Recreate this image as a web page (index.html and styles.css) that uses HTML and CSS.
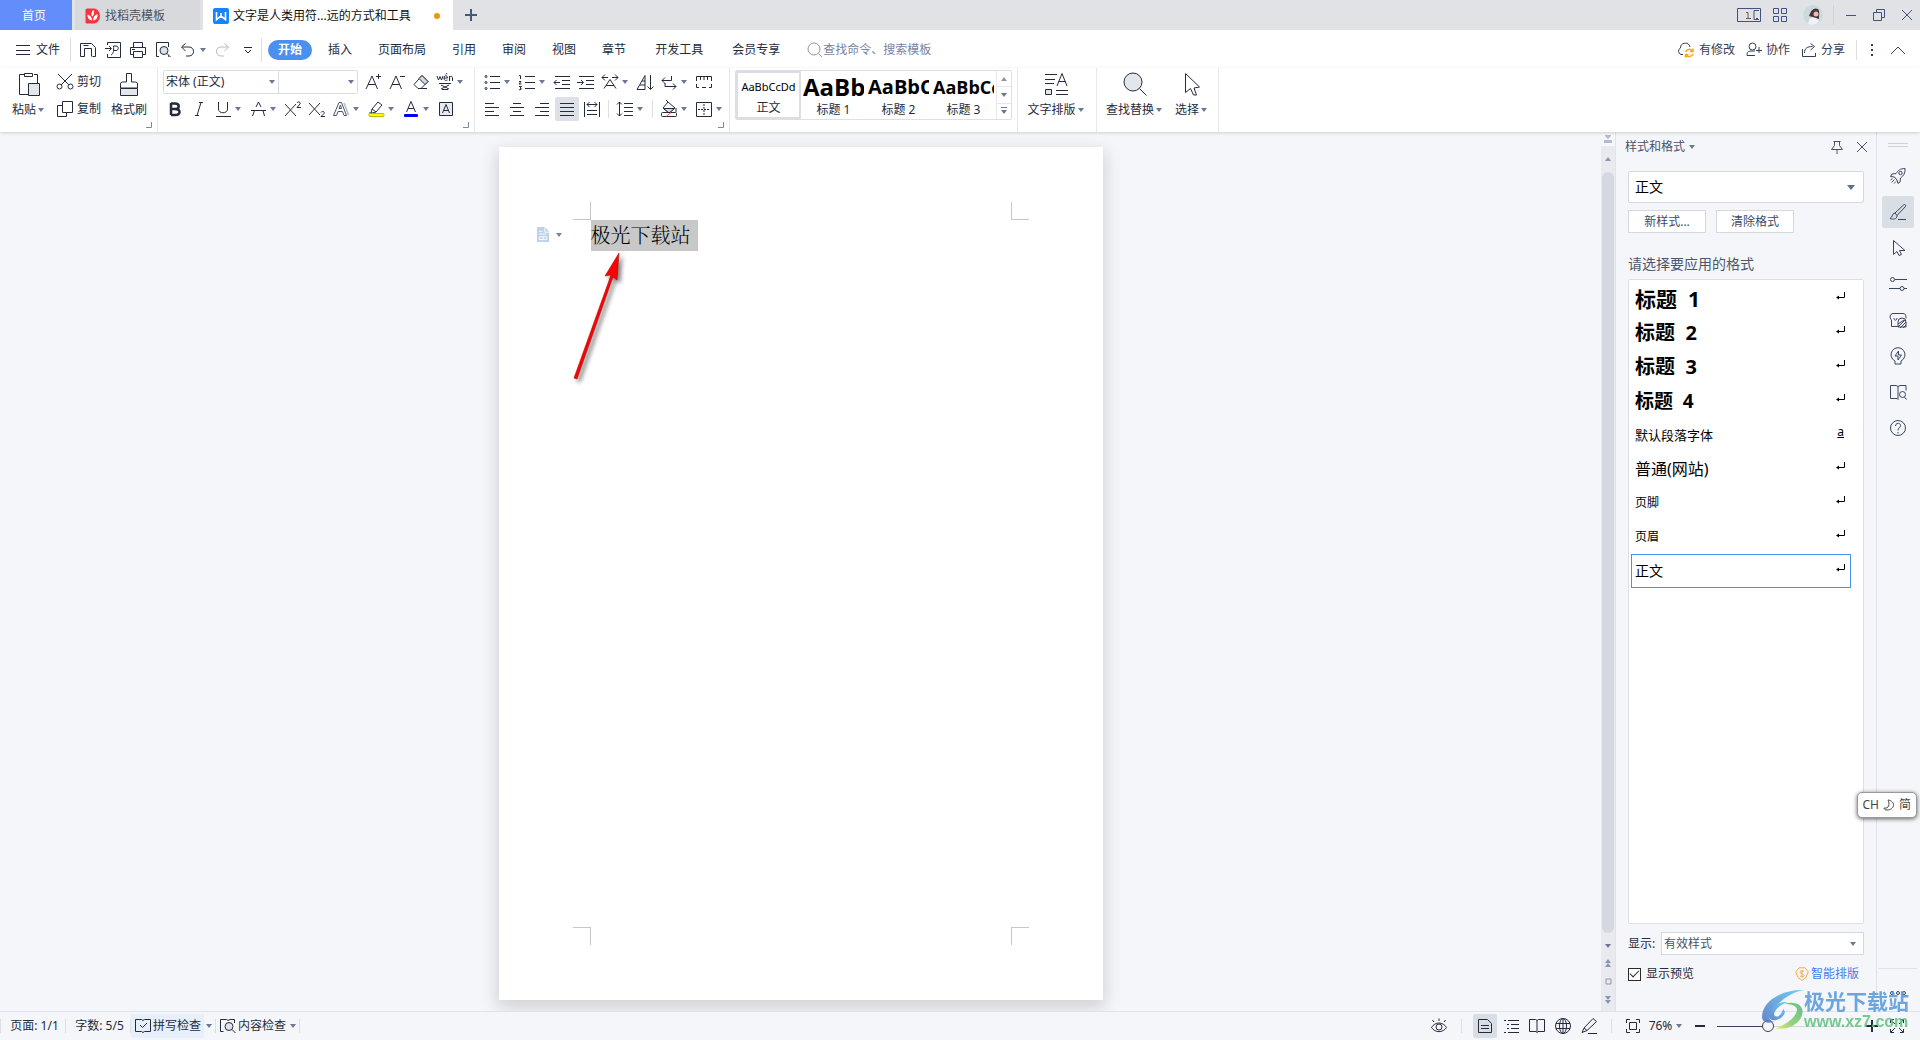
FILE: index.html
```html
<!DOCTYPE html>
<html lang="zh-CN">
<head>
<meta charset="utf-8">
<title>文字是人类用符...远的方式和工具</title>
<link rel="stylesheet" href="styles.css">
</head>
<body>
<svg class="sprite" aria-hidden="true">
  <symbol id="caret" viewBox="0 0 7 4"><path d="M0 0h6L3 4z" fill="#6b7895" stroke="none"/></symbol>
  <symbol id="caret-up" viewBox="0 0 7 4"><path d="M0 4h6L3 0z" fill="#8a96ae" stroke="none"/></symbol>
  <symbol id="launch" viewBox="0 0 6 6"><path d="M5.500 0v5.500H0" stroke="#7e89a3"/></symbol>
  <symbol id="return" viewBox="0 0 10 10"><path d="M8.500 1v5.500H2"/><path d="M0 6.500l3-2v4z" fill="currentColor" stroke="none"/></symbol>
  <symbol id="docer" viewBox="0 0 16 16"><path d="M2 .5h7a6 7.500 0 0 1 0 15H2A1.500 1.500 0 0 1 .5 14V2A1.500 1.500 0 0 1 2 .5z" fill="#f8333c" stroke="none"/><path d="M7 12.500C3.500 12 2.500 9.500 2.500 6.500 5.500 7.500 7 9.500 7 12.500zM7 8.500C5.800 6 6.500 3.500 8.500 2 9.800 4.500 9 7.500 7 8.500zM8 12.500C8 9.500 9.500 7 12.500 6c.5 3.500-1 6-4.500 6.500z" fill="#fff" stroke="none"/></symbol>
  <symbol id="writer" viewBox="0 0 16 16"><rect width="16" height="16" rx="2" fill="#1684fc" stroke="none"/><path d="M3.500 4v7.500L8 8l4.500 3.500V4M8 8V5" stroke="#fff" stroke-width="1.600"/></symbol>
  <symbol id="plus" viewBox="0 0 12 12"><path d="M6 0v12M0 6h12" stroke-width="2"/></symbol>
  <symbol id="tabs" viewBox="0 0 24 14"><path d="M.5.5h23v13H.5zM22 2.500h-5v9h5M19 10.500h2"/><path d="M9 4.500h2V10M9 10.500h5" stroke="#665c55"/></symbol>
  <symbol id="grid" viewBox="0 0 14 14"><path d="M.5.5h5v5h-5zM8.500.5h5v5h-5zM.5 8.500h5v5h-5zM8.500 8.500h5v5h-5z"/></symbol>
  <symbol id="min" viewBox="0 0 12 12"><path d="M1 6.500h10"/></symbol>
  <symbol id="restore" viewBox="0 0 12 12"><path d="M3.500 3V.5h8v8H9M.5 3.500h8v8h-8z"/></symbol>
  <symbol id="close" viewBox="0 0 12 12"><path d="M1 1l10 10M11 1L1 11"/></symbol>
  <symbol id="menu" viewBox="0 0 14 12"><path d="M0 1.500h14M0 6.500h14M0 10.500h14"/></symbol>
  <symbol id="save" viewBox="0 0 16 16"><path d="M4.500 14.500h-4v-13h11l4 4v9h-3M4.500 14.500v-8h7v8M3.500 3.500h5"/></symbol>
  <symbol id="pdf" viewBox="0 0 16 16"><path d="M2.500 3V.5h13v15h-13V12M0 6.500h6M4 4l2.500 2.500L4 9M6 13c2.500-1 3-5 2.500-9H11c3 0 3 4.500 0 4.500H8.500"/></symbol>
  <symbol id="print" viewBox="0 0 16 16"><path d="M3.500 5V.5h9V5M3 12.500H.5v-7h15v7H13M3.500 9.500h9v6h-9zM2 7.500h3"/></symbol>
  <symbol id="preview" viewBox="0 0 16 16"><path d="M4 14.500H1.500v-14h12V5M13.500 13.500v1H13"/><circle cx="9" cy="8.500" r="4" fill="#dfe2e8"/><path d="M12 11.500l3.500 3.500"/></symbol>
  <symbol id="undo" viewBox="0 0 16 16"><path d="M5.500 1.500L1.500 5l4 4M2 5h7c6 0 6 9 0 9H6"/></symbol>
  <symbol id="redo" viewBox="0 0 16 16"><path d="M10.500 1.500l4 3.500-4 4M14 5H7c-6 0-6 9 0 9h3"/></symbol>
  <symbol id="more" viewBox="0 0 8 8"><path d="M0 1.500h8M1 4l3 3 3-3"/></symbol>
  <symbol id="search" viewBox="0 0 16 16"><circle cx="7" cy="7" r="6"/><path d="M11.500 11.500L15 15"/></symbol>
  <symbol id="cloud" viewBox="0 0 18 16"><path d="M6 12.500H4A3.500 3.500 0 0 1 3.500 6 4.800 4.800 0 0 1 13 5"/><path d="M8.500 10a4 4 0 0 1 7-1M16 12a4 4 0 0 1-7 1M16 6.500V9.500h-3M8.500 15.500v-3h3" stroke="#f5a623" stroke-width="1.500"/></symbol>
  <symbol id="collab" viewBox="0 0 16 16"><circle cx="6.500" cy="4.500" r="3.500"/><path d="M9 13.500H1v-1c0-3 2-3.500 5-3.500h3M13 5v6M10 8.500h6"/></symbol>
  <symbol id="share" viewBox="0 0 16 16"><path d="M1.500 7v7.500h13V11M3.500 11c0-5 3-6.500 8-6.500M9.500 1.500l4 3-4 3.500"/></symbol>
  <symbol id="dots" viewBox="0 0 4 14"><path d="M1 1h2v2H1zM1 6h2v2H1zM1 11h2v2H1z" fill="currentColor" stroke="none"/></symbol>
  <symbol id="fold" viewBox="0 0 16 10"><path d="M1 9l7-7 7 7"/></symbol>

  <symbol id="paste" viewBox="0 0 28 28"><path d="M13 24.500H4.500v-20H9M19 4.500h3.500V13M9.500 3.500h8v3h-8z"/><path d="M13.500 13.500h11v12h-11z" fill="#e3e6eb"/></symbol>
  <symbol id="cut" viewBox="0 0 20 20"><path d="M3 2l11 11M17 2L6 13"/><circle cx="4.500" cy="14.500" r="2.500"/><circle cx="15.500" cy="14.500" r="2.500"/></symbol>
  <symbol id="copy" viewBox="0 0 20 20"><path d="M7.500 2.500h10v11h-10zM7 6.500H2.500v11h9V14"/></symbol>
  <symbol id="brush" viewBox="0 0 28 28"><path d="M11.500 12V3.500h5V12h4q2 0 2 2v4h-17v-4q0-2 2-2z"/><path d="M5.500 18.500h17v7h-17z" fill="#e3e6eb"/></symbol>
  <symbol id="grow" viewBox="0 0 20 20"><path d="M3 17L9 4l5.500 13M5 12.500h7.500M13 4.500h5M15.500 2v5"/></symbol>
  <symbol id="shrink" viewBox="0 0 20 20"><path d="M3 17L9 4l5.500 13M5 12.500h7.500M13 4.500h5"/></symbol>
  <symbol id="eraser" viewBox="0 0 20 20"><path d="M11 3.500l6 6-7 7H7l-4-4z" fill="#fff"/><path d="M11 3.500l6 6-3 3-6-6z" fill="#d5d9df"/><path d="M7 16.500h9"/></symbol>
  <symbol id="pinyin" viewBox="0 0 20 20"><path d="M2 4l1.500 4L5 4.500 6.500 8 8 4M9 6h3.500c0-3-3.500-3-3.500 0s2 2.500 3.500 2M14.500 4v5M14.500 5.500c2-2 3-1 3 .5v3M11 2.500l1-1.500M4 11.500h12M6 13l8 4M14 13l-8 4M7 17.500h6"/></symbol>
  <symbol id="bold" viewBox="0 0 20 20"><path d="M6 4v12M6 4.500h4c5 0 5 5.500 0 5.500H6M10 10c6 0 6 6 0 6H6" stroke-width="2.500"/></symbol>
  <symbol id="italic" viewBox="0 0 20 20"><path d="M12 3.500L8 16.500M10 3.500h4M6 16.500h4"/></symbol>
  <symbol id="underline" viewBox="0 0 20 20"><path d="M5.500 3v7c0 5 9 5 9 0V3M3 17.500h15"/></symbol>
  <symbol id="strike" viewBox="0 0 20 20"><path d="M4.500 17l2-5.500M8 8l2.500-5L13 8M15 11.500l1.500 5.500M3 11.500h15"/></symbol>
  <symbol id="sup" viewBox="0 0 20 20"><path d="M2 5l11 12M13 5L2 17M14 4c1-2 4-1 3 1l-3 3.500h4"/></symbol>
  <symbol id="sub" viewBox="0 0 20 20"><path d="M2 4l11 12M13 4L2 16M14 13.500c1-2 4-1 3 1l-3 3h4"/></symbol>
  <symbol id="effect" viewBox="0 0 20 20"><path d="M2.500 16.500L8 3.500h2.500l5 13H13l-1.500-4H7L5.500 16.500zM8 9.500h2.500L9.500 6z" stroke="#4b556b"/><path d="M13 4l4.500 12" stroke="#b3bac6" stroke-width="1.500"/></symbol>
  <symbol id="marker" viewBox="0 0 20 20"><path d="M5 14l1-4 6-7 4 3-6 7-4 1M6 10l4 3M3 14h3" /><rect x="3" y="14.500" width="15" height="3" rx="1" fill="#ff0" stroke="#b9b900"/></symbol>
  <symbol id="color" viewBox="0 0 20 20"><path d="M5.500 13L10 2.500 14.500 13M7 9.500h6"/><rect x="3" y="15" width="14" height="3" rx="1" fill="#0000f5" stroke="none"/></symbol>
  <symbol id="boxed" viewBox="0 0 20 20"><path d="M3.500 3.500h13v13h-13z" fill="#e8eaee"/><path d="M6.500 14L10 5.500l3.500 8.500M7.500 11.500h5"/></symbol>
  <symbol id="bullets" viewBox="0 0 20 20"><path d="M8 4.500h10M8 10.500h10M8 16.500h10"/><circle cx="4" cy="4.500" r="1"/><circle cx="4" cy="10.500" r="1"/><circle cx="4" cy="16.500" r="1"/></symbol>
  <symbol id="numbers" viewBox="0 0 20 20"><path d="M8 4.500h10M8 10.500h10M8 16.500h10M2 3.500h1.500V7M2 9.500h2l-2 2.500h2.500M2 14.500h2.500L3 16l1.500 1-2.500 1"/></symbol>
  <symbol id="outdent" viewBox="0 0 20 20"><path d="M3 4.500h15M10 8.500h8M10 12.500h8M3 16.500h15M2 10.500h6M4.500 8L2 10.500 4.500 13"/></symbol>
  <symbol id="indent" viewBox="0 0 20 20"><path d="M3 4.500h15M10 8.500h8M10 12.500h8M3 16.500h15M1 10.500h6M5 8l2.500 2.500L5 13"/></symbol>
  <symbol id="scale" viewBox="0 0 20 20"><path d="M4 16.500l6-9 6 9M6 13.500h8M2 5.500l3-3M2 5.500h6M2 5.500l3 3M18 5.500l-3-3M18 5.500h-6M18 5.500l-3 3"/></symbol>
  <symbol id="sort" viewBox="0 0 20 20"><path d="M2 17.500L10 3.500v14zM5 13h5M7 9h3M15.500 3v14M12.500 14.500l3 3 3-3"/></symbol>
  <symbol id="wrap" viewBox="0 0 20 20"><path d="M12.500 4v4.500H3M6 5.500l-3 3 3 3M6 14.500h11M14 11.500l3 3-3 3M6 11v3.500"/></symbol>
  <symbol id="ruler" viewBox="0 0 20 20"><path d="M2.500 9V4.500h15V9M6.500 5v3M10 5v3M13.500 5v3M2.500 12v3.500H5M8 15.500h4M15 15.500h2.500V12"/></symbol>
  <symbol id="left" viewBox="0 0 20 20"><path d="M3 4.500h9M3 8.500h14M3 12.500h9M3 16.500h14"/></symbol>
  <symbol id="center" viewBox="0 0 20 20"><path d="M6 4.500h8M3 8.500h14M6 12.500h8M3 16.500h14"/></symbol>
  <symbol id="right" viewBox="0 0 20 20"><path d="M8 4.500h9M3 8.500h14M8 12.500h9M3 16.500h14"/></symbol>
  <symbol id="justify" viewBox="0 0 20 20"><path d="M3 4.500h14M3 8.500h14M3 12.500h14M3 16.500h14"/></symbol>
  <symbol id="spread" viewBox="0 0 20 20"><path d="M2.500 3v15M17.500 3v15M5 5.500h10M7.500 3L5 5.500 7.500 8M12.500 3L15 5.500 12.500 8M5 11.500h10M5 15.500h10"/></symbol>
  <symbol id="spacing" viewBox="0 0 20 20"><path d="M4.500 3v14M2 5.500l2.500-2.500L7 5.500M2 14.500L4.500 17 7 14.500M9 4.500h9M9 8.500h9M9 12.500h9M9 16.500h9"/></symbol>
  <symbol id="fill" viewBox="0 0 20 20"><path d="M9 3l7 6-6 5-6-5z" fill="#fff"/><path d="M4.500 9.500h11L10 14z" fill="#d5d9df"/><path d="M9 3L7 1M17 9v4"/><rect x="2.500" y="13.500" width="15" height="4" rx="1" fill="#fff"/><path d="M7 17.500l5-4" stroke="#f05a5a"/></symbol>
  <symbol id="border" viewBox="0 0 20 20"><path d="M2.500 3.500h15v14h-15z"/><path d="M10 5v11M4 10.500h12" stroke-dasharray="2 1"/></symbol>
  <symbol id="layout" viewBox="0 0 28 28"><path d="M3 4.500h12M3 9.500h10M3 13.500h9M15 16l5-12.500L25 16M16.500 11.500h7M14 20.500h12M14 24.500h12"/><path d="M3.500 19.500h6v5h-6z" fill="#e3e6eb"/></symbol>
  <symbol id="find" viewBox="0 0 28 28"><circle cx="12" cy="12" r="9" fill="#e3e6eb"/><path d="M18.500 18.500l7 7"/></symbol>
  <symbol id="select" viewBox="0 0 28 28"><path d="M7.500 3.500v19l5-4 3 6.500h3l-2.500-7 5.500-1z"/></symbol>

  <symbol id="pin" viewBox="0 0 14 14"><path d="M3.500 1.500h7M4.500 1.500v4l-3 4h11l-3-4v-4M7 9.500V14"/></symbol>
  <symbol id="rocket" viewBox="0 0 18 18"><path d="M16 1.500c-5 0-7 2-9 5L3 7 1.500 9.500l4 .5 2.500 3 1 3.500L11 15l.5-4c3-2 5-5 4.500-9.500zM1.500 13l2-1.500M2.500 15.500l3-3M5 16.500l2-2"/><circle cx="11.500" cy="6" r="1.700"/></symbol>
  <symbol id="pen" viewBox="0 0 18 18"><path d="M16.500 2c-1-1-2 0-2.500.5L6 10l2 2.500 8-8.500c.7-.8 1-1.500.5-2zM6 10c-3 0-2 4-5 5.500 3 1 7 1 7-3M9 16.500h8"/></symbol>
  <symbol id="cursor" viewBox="0 0 18 18"><path d="M4.500 1.500v14l3.500-3 2 4 2.500-1-2-4h5.500z"/></symbol>
  <symbol id="sliders" viewBox="0 0 18 18"><circle cx="3.500" cy="4.500" r="2"/><circle cx="13" cy="13.500" r="2"/><path d="M6 4.500h12M0 13.500h11M15 13.500h3"/></symbol>
  <symbol id="texture" viewBox="0 0 18 18"><path d="M5.500 15.500h-3V9C0 7 1 2.500 4 2.500h10c3 0 3 3 3 5M5 7c0 3 3 3 3 0M9 15.500H5"/><path d="M9 11a4 4 0 0 1 8 0v5H9zM9 13l6-4M9 16l7-7M11 17l6-6M14 17l3-3"/></symbol>
  <symbol id="bulb" viewBox="0 0 18 18"><path d="M6 14a7 7 0 1 1 6 0v3H6zM9.500 4L6 9h3v4l3.500-5H9.500z"/></symbol>
  <symbol id="bookfind" viewBox="0 0 18 18"><path d="M9 3.500L7 2.500H1.500v13H8l1 1V3.500l2-1h6v5"/><circle cx="13.500" cy="11.500" r="3"/><path d="M15.500 14l2 2.500"/></symbol>
  <symbol id="help" viewBox="0 0 18 18"><circle cx="9" cy="9" r="7.500"/><path d="M6.500 7c0-3.500 5-3.500 5-.5C11.500 9 9 8.500 9 11.500M9 13v1.500"/></symbol>
  <symbol id="three" viewBox="0 0 18 6"><circle cx="3" cy="3" r="1.500"/><circle cx="9" cy="3" r="1.500"/><circle cx="15" cy="3" r="1.500"/></symbol>
  <symbol id="gem" viewBox="0 0 14 14"><path d="M4 .8h6l3.300 4L11 10.500 7 13.300 3 10.500.7 5z" stroke="#f2ae3c"/><path d="M9 4.500c-1-1-4-1-4 .7S9 6.800 9 8.500s-3 1.500-4 .3M7 3v7.500" stroke="#f2ae3c"/></symbol>
  <symbol id="smart" viewBox="0 0 14 16"><path d="M0 0h9l4 5v11H0z" fill="#b9cde9" stroke="none"/><path d="M8.500 0v5.500H13M2 4.500h4M2 7.500h8M2.500 10.500h8v3h-8zM6.500 10v3" stroke="#fff"/></symbol>

  <symbol id="spell" viewBox="0 0 16 16"><path d="M6.500 1.500h-6v12h6l1.500 1 1.500-1h6v-12h-6L8 2.500zM5 7l2.500 2.500L12 5"/></symbol>
  <symbol id="content" viewBox="0 0 16 16"><path d="M6.500 1.500h-6v12h3M10 1.500h4.500V5M6.500 1.500L8 2.500l2-1"/><circle cx="9" cy="8.500" r="4" fill="#dfe2e8"/><path d="M12 11.500l3.500 3.500"/></symbol>
  <symbol id="eye" viewBox="0 0 18 18"><path d="M1.500 10.500C5 4.500 13 4.500 16.500 10.500 13 16 5 16 1.500 10.500zM9 4V1.500M4 5L2.500 3M14 5l1.500-2"/><circle cx="9" cy="10" r="3"/></symbol>
  <symbol id="pagev" viewBox="0 0 18 18"><path d="M2.500 2.500h9l4 4v9h-13zM5 8.500h8M5 11.500h8"/></symbol>
  <symbol id="outline" viewBox="0 0 18 18"><path d="M6 3.500h11M9 7.500h8M9 11.500h8M6 15.500h11M2 3.500h2M5 7.500h2M5 11.500h2M2 15.500h2"/></symbol>
  <symbol id="book" viewBox="0 0 18 18"><path d="M9 3.500l-1.500-1h-6v12H8l1 1 1-1h6.500v-12h-6zM9 3.500v12"/></symbol>
  <symbol id="globe" viewBox="0 0 18 18"><circle cx="9" cy="9" r="7.500"/><ellipse cx="9" cy="9" rx="3.500" ry="7.500"/><path d="M9 1.500v15M2 6.500h14M2 11.500h14"/></symbol>
  <symbol id="write" viewBox="0 0 18 18"><path d="M13 1.500l3.500 3L7 13.500 2 15.500 4 11zM4 11l3 2.500M8 16.500h9"/></symbol>
  <symbol id="fit" viewBox="0 0 16 16"><path d="M1.500 5V1.500H5M11 1.500h3.500V5M14.500 11v3.500H11M5 14.500H1.500V11M4.500 4.500h7v7h-7z"/></symbol>
  <symbol id="full" viewBox="0 0 16 16"><path d="M1.500 5V1.500H5M11 1.500h3.500V5M14.500 11v3.500H11M5 14.500H1.500V11M2 2l4 4M14 2l-4 4M2 14l4-4M14 14l-4-4"/></symbol>
</svg>

<header class="tabbar">
  <button class="tab tab-home">首页</button>
  <button class="tab tab-docer"><svg class="i16"><use href="#docer"/></svg>找稻壳模板</button>
  <button class="tab tab-doc"><svg class="i16"><use href="#writer"/></svg>文字是人类用符...远的方式和工具<span class="unsaved"></span></button>
  <button class="newtab" aria-label="新建"><svg class="i12"><use href="#plus"/></svg></button>
  <div class="window-tools">
    <button aria-label="标签"><svg width="24" height="14"><use href="#tabs"/></svg></button>
    <button aria-label="应用"><svg width="14" height="14"><use href="#grid"/></svg></button>
    <button aria-label="账户"><svg width="20" height="20" viewBox="0 0 20 20"><circle cx="10" cy="10" r="10" fill="#ccdae0" stroke="none"/><path d="M5 19c1-4 2-7 5-7s5 3 6 5q-4 4-11 2z" fill="#eef3f5" stroke="none"/><path d="M6 11c2-6 5-9 9-7 2 2 1 7 1 10l-3-1z" fill="#4b3438" stroke="none"/><circle cx="13" cy="9" r="2.500" fill="#e9bfae" stroke="none"/></svg></button>
    <span class="vline"></span>
    <button aria-label="最小化"><svg class="i12"><use href="#min"/></svg></button>
    <button aria-label="还原"><svg class="i12"><use href="#restore"/></svg></button>
    <button aria-label="关闭"><svg class="i12"><use href="#close"/></svg></button>
  </div>
</header>

<nav class="menubar">
  <button class="file"><svg width="14" height="12"><use href="#menu"/></svg>文件</button>
  <span class="vline"></span>
  <div class="quick">
    <button aria-label="保存"><svg class="i16"><use href="#save"/></svg></button>
    <button aria-label="输出为PDF"><svg class="i16"><use href="#pdf"/></svg></button>
    <button aria-label="打印"><svg class="i16"><use href="#print"/></svg></button>
    <button aria-label="打印预览"><svg class="i16"><use href="#preview"/></svg></button>
    <button class="undo" aria-label="撤销"><svg class="i16"><use href="#undo"/></svg><svg class="caret"><use href="#caret"/></svg></button>
    <button class="redo" aria-label="恢复"><svg class="i16"><use href="#redo"/></svg></button>
    <button aria-label="更多"><svg width="8" height="8"><use href="#more"/></svg></button>
  </div>
  <span class="vline"></span>
  <div class="menus">
    <button class="current">开始</button><button>插入</button><button>页面布局</button><button>引用</button><button>审阅</button><button>视图</button><button>章节</button><button class="wide">开发工具</button><button class="wide">会员专享</button>
  </div>
  <label class="command"><svg class="i16"><use href="#search"/></svg><input type="text" placeholder="查找命令、搜索模板"></label>
  <div class="cloud-tools">
    <button><svg width="18" height="16"><use href="#cloud"/></svg>有修改</button>
    <button><svg class="i16"><use href="#collab"/></svg>协作</button>
    <button><svg class="i16"><use href="#share"/></svg>分享</button>
    <span class="vline"></span>
    <button class="dots" aria-label="更多"><svg width="4" height="14"><use href="#dots"/></svg></button>
    <button aria-label="收起"><svg width="16" height="10"><use href="#fold"/></svg></button>
  </div>
</nav>

<section class="ribbon">
  <div class="group clipboard">
    <button class="big"><svg class="i28"><use href="#paste"/></svg><span>粘贴<svg class="caret"><use href="#caret"/></svg></span></button>
    <div class="rows">
      <button class="small"><svg class="i20"><use href="#cut"/></svg>剪切</button>
      <button class="small"><svg class="i20"><use href="#copy"/></svg>复制</button>
    </div>
    <button class="big"><svg class="i28"><use href="#brush"/></svg><span>格式刷</span></button>
    <svg class="launch"><use href="#launch"/></svg>
  </div>
  <div class="group font">
    <div class="row">
      <div class="combos">
        <label class="combo combo-font"><select aria-label="字体"><option>宋体 (正文)</option></select><svg class="caret"><use href="#caret"/></svg></label>
        <label class="combo combo-size"><select aria-label="字号"><option></option></select><svg class="caret"><use href="#caret"/></svg></label>
      </div>
      <button class="tool" aria-label="增大字号"><svg class="i20"><use href="#grow"/></svg></button>
      <button class="tool" aria-label="减小字号"><svg class="i20"><use href="#shrink"/></svg></button>
      <button class="tool" aria-label="清除格式"><svg class="i20"><use href="#eraser"/></svg></button>
      <button class="tool drop" aria-label="拼音指南"><svg class="i20"><use href="#pinyin"/></svg><svg class="caret"><use href="#caret"/></svg></button>
    </div>
    <div class="row">
      <button class="tool" aria-label="加粗"><svg class="i20"><use href="#bold"/></svg></button>
      <button class="tool" aria-label="倾斜"><svg class="i20"><use href="#italic"/></svg></button>
      <button class="tool drop" aria-label="下划线"><svg class="i20"><use href="#underline"/></svg><svg class="caret"><use href="#caret"/></svg></button>
      <button class="tool drop" aria-label="删除线"><svg class="i20"><use href="#strike"/></svg><svg class="caret"><use href="#caret"/></svg></button>
      <button class="tool" aria-label="上标"><svg class="i20"><use href="#sup"/></svg></button>
      <button class="tool" aria-label="下标"><svg class="i20"><use href="#sub"/></svg></button>
      <button class="tool drop" aria-label="文字效果"><svg class="i20"><use href="#effect"/></svg><svg class="caret"><use href="#caret"/></svg></button>
      <button class="tool drop" aria-label="突出显示"><svg class="i20"><use href="#marker"/></svg><svg class="caret"><use href="#caret"/></svg></button>
      <button class="tool drop" aria-label="字体颜色"><svg class="i20"><use href="#color"/></svg><svg class="caret"><use href="#caret"/></svg></button>
      <button class="tool" aria-label="字符底纹"><svg class="i20"><use href="#boxed"/></svg></button>
    </div>
    <svg class="launch"><use href="#launch"/></svg>
  </div>
  <div class="group para">
    <div class="row">
      <button class="tool drop" aria-label="项目符号"><svg class="i20"><use href="#bullets"/></svg><svg class="caret"><use href="#caret"/></svg></button>
      <button class="tool drop" aria-label="编号"><svg class="i20"><use href="#numbers"/></svg><svg class="caret"><use href="#caret"/></svg></button>
      <button class="tool" aria-label="减少缩进"><svg class="i20"><use href="#outdent"/></svg></button>
      <button class="tool" aria-label="增加缩进"><svg class="i20"><use href="#indent"/></svg></button>
      <button class="tool drop" aria-label="字符缩放"><svg class="i20"><use href="#scale"/></svg><svg class="caret"><use href="#caret"/></svg></button>
      <button class="tool" aria-label="排序"><svg class="i20"><use href="#sort"/></svg></button>
      <button class="tool drop" aria-label="换行"><svg class="i20"><use href="#wrap"/></svg><svg class="caret"><use href="#caret"/></svg></button>
      <button class="tool" aria-label="制表位"><svg class="i20"><use href="#ruler"/></svg></button>
    </div>
    <div class="row">
      <div class="aligns">
        <button class="tool" aria-label="左对齐"><svg class="i20"><use href="#left"/></svg></button>
        <button class="tool" aria-label="居中"><svg class="i20"><use href="#center"/></svg></button>
        <button class="tool" aria-label="右对齐"><svg class="i20"><use href="#right"/></svg></button>
        <button class="tool on" aria-label="两端对齐"><svg class="i20"><use href="#justify"/></svg></button>
        <button class="tool" aria-label="分散对齐"><svg class="i20"><use href="#spread"/></svg></button>
      </div>
      <span class="vline"></span>
      <button class="tool drop" aria-label="行距"><svg class="i20"><use href="#spacing"/></svg><svg class="caret"><use href="#caret"/></svg></button>
      <span class="vline"></span>
      <button class="tool drop" aria-label="底纹"><svg class="i20"><use href="#fill"/></svg><svg class="caret"><use href="#caret"/></svg></button>
      <button class="tool drop" aria-label="边框"><svg class="i20"><use href="#border"/></svg><svg class="caret"><use href="#caret"/></svg></button>
    </div>
    <svg class="launch"><use href="#launch"/></svg>
  </div>
  <div class="group styles">
    <div class="gallery">
      <button class="style picked"><b class="p0">AaBbCcDd</b><span>正文</span></button>
      <button class="style"><b class="p1">AaBb</b><span>标题 1</span></button>
      <button class="style"><b class="p2">AaBbC</b><span>标题 2</span></button>
      <button class="style"><b class="p3">AaBbCc</b><span>标题 3</span></button>
      <div class="gallery-scroll">
        <button aria-label="上一行"><svg class="caret"><use href="#caret-up"/></svg></button>
        <button aria-label="下一行"><svg class="caret"><use href="#caret"/></svg></button>
        <button aria-label="展开"><svg width="7" height="8" viewBox="0 0 7 8"><path d="M0 .5h6" stroke="#6b7895"/><path d="M0 3h6L3 7z" fill="#6b7895" stroke="none"/></svg></button>
      </div>
    </div>
  </div>
  <div class="group typeset"><button class="big"><svg class="i28"><use href="#layout"/></svg><span>文字排版<svg class="caret"><use href="#caret"/></svg></span></button></div>
  <div class="group edit">
    <button class="big"><svg class="i28"><use href="#find"/></svg><span>查找替换<svg class="caret"><use href="#caret"/></svg></span></button>
    <button class="big"><svg class="i28"><use href="#select"/></svg><span>选择<svg class="caret"><use href="#caret"/></svg></span></button>
  </div>
</section>

<main class="work">
  <div class="canvas">
    <article class="page">
      <div class="marks"><i class="m-tl"></i><i class="m-tr"></i></div>
      <div class="body">
        <button class="smart" aria-label="智能标记"><svg width="13" height="15"><use href="#smart"/></svg><svg class="caret"><use href="#caret"/></svg></button>
        <p><mark>极光下载站</mark></p>
      </div>
      <div class="marks"><i class="m-bl"></i><i class="m-br"></i></div>
      <svg class="arrow" viewBox="0 0 60 140"><path d="M46 4L32 27l6-1L1 129l3 1L40 28l4 3z" fill="#f00" stroke="#a01010" stroke-width=".6"/></svg>
    </article>
  </div>
  <div class="scroll">
    <div class="scroll-top"><svg width="8" height="8" viewBox="0 0 8 8"><path d="M1 0h6v1L4 4 1 1zM0 5h8v3H0z" fill="#b4bccb" stroke="none"/></svg></div>
    <svg class="caret"><use href="#caret-up"/></svg>
    <div class="thumb"></div>
    <svg class="caret"><use href="#caret"/></svg>
    <svg width="7" height="8" viewBox="0 0 7 8"><path d="M0 4l3-4 3 4zM0 8l3-4 3 4z" fill="#8a96ae" stroke="none"/></svg>
    <svg width="7" height="7" viewBox="0 0 7 7"><path d="M1 1h5v5H1z" stroke="#8a96ae"/></svg>
    <svg width="7" height="8" viewBox="0 0 7 8"><path d="M0 0l3 4 3-4zM0 4l3 4 3-4z" fill="#8a96ae" stroke="none"/></svg>
  </div>
  <aside class="panel">
    <div class="panel-head"><button>样式和格式<svg class="caret"><use href="#caret"/></svg></button><button class="pin" aria-label="固定"><svg width="14" height="14"><use href="#pin"/></svg></button><button aria-label="关闭"><svg class="i12"><use href="#close"/></svg></button></div>
    <label class="combo current-style"><select aria-label="当前样式"><option>正文</option></select><svg width="8" height="5" viewBox="0 0 8 5"><path d="M0 0h8L4 5z" fill="#5f6f93" stroke="none"/></svg></label>
    <div class="panel-buttons"><button>新样式...</button><button>清除格式</button></div>
    <h2>请选择要应用的格式</h2>
    <ul class="style-list">
      <li class="h1">标题&nbsp; 1<svg class="ret"><use href="#return"/></svg></li>
      <li class="h2">标题&nbsp; 2<svg class="ret"><use href="#return"/></svg></li>
      <li class="h2">标题&nbsp; 3<svg class="ret"><use href="#return"/></svg></li>
      <li class="h4">标题&nbsp; 4<svg class="ret"><use href="#return"/></svg></li>
      <li class="t13">默认段落字体<u>a</u></li>
      <li class="t16">普通(网站)<svg class="ret"><use href="#return"/></svg></li>
      <li class="t12">页脚<svg class="ret"><use href="#return"/></svg></li>
      <li class="t12">页眉<svg class="ret"><use href="#return"/></svg></li>
      <li class="t14 chosen">正文<svg class="ret"><use href="#return"/></svg></li>
    </ul>
    <div class="show"><label for="show">显示:</label><div class="combo"><select id="show"><option>有效样式</option></select><svg class="caret"><use href="#caret"/></svg></div></div>
    <div class="options"><label><input type="checkbox" checked>显示预览</label><a href="#"><svg width="14" height="14"><use href="#gem"/></svg>智能排版</a></div>
  </aside>
  <nav class="rail">
    <span class="grip"></span>
    <button aria-label="快捷"><svg class="i18"><use href="#rocket"/></svg></button>
    <button class="on" aria-label="样式"><svg class="i18"><use href="#pen"/></svg></button>
    <button aria-label="选择"><svg class="i18"><use href="#cursor"/></svg></button>
    <button aria-label="属性"><svg class="i18"><use href="#sliders"/></svg></button>
    <button aria-label="素材"><svg class="i18"><use href="#texture"/></svg></button>
    <button aria-label="灵感"><svg class="i18"><use href="#bulb"/></svg></button>
    <button aria-label="阅读"><svg class="i18"><use href="#bookfind"/></svg></button>
    <button aria-label="帮助"><svg class="i18"><use href="#help"/></svg></button>
    <button class="rail-more" aria-label="更多"><svg width="18" height="6"><use href="#three"/></svg></button>
  </nav>
</main>

<footer class="status">
  <span class="vline"></span><span class="info">页面: 1/1</span><span class="vline"></span><span class="info">字数: 5/5</span><span class="vline"></span>
  <button class="check lit"><svg class="i16"><use href="#spell"/></svg>拼写检查</button><button class="dd" aria-label="拼写选项"><svg class="caret"><use href="#caret"/></svg></button><span class="vline"></span>
  <button class="check"><svg class="i16"><use href="#content"/></svg>内容检查</button><button class="dd" aria-label="内容选项"><svg class="caret"><use href="#caret"/></svg></button><span class="vline"></span>
  <div class="views">
    <button aria-label="护眼"><svg class="i18"><use href="#eye"/></svg></button>
    <span class="vline"></span>
    <button class="on" aria-label="页面视图"><svg class="i18"><use href="#pagev"/></svg></button>
    <button aria-label="大纲"><svg class="i18"><use href="#outline"/></svg></button>
    <button aria-label="阅读版式"><svg class="i18"><use href="#book"/></svg></button>
    <button aria-label="Web版式"><svg class="i18"><use href="#globe"/></svg></button>
    <button aria-label="写作模式"><svg class="i18"><use href="#write"/></svg></button>
    <span class="vline"></span>
  </div>
  <button class="fit" aria-label="最佳缩放"><svg class="i16"><use href="#fit"/></svg></button>
  <button class="percent">76%<svg class="caret"><use href="#caret"/></svg></button>
  <button class="minus" aria-label="缩小"><svg width="10" height="2"><path d="M0 1h10" stroke-width="2"/></svg></button>
  <input class="zoom" type="range" min="0" max="100" value="36" aria-label="缩放">
  <button class="plus" aria-label="放大"><svg class="i12"><use href="#plus"/></svg></button>
  <button class="full" aria-label="全屏"><svg class="i16"><use href="#full"/></svg></button>
</footer>

<div class="ime">CH <svg width="12" height="12" viewBox="0 0 12 12"><path d="M5 1c8 1 7 10-1 10-2 0-3-1-3-2 5 1 6-4 4-8z"/></svg> 简</div>
<div class="watermark">
  <svg width="42" height="42" viewBox="0 0 42 42">
    <defs>
      <linearGradient id="wb" x1="1" y1="0" x2="0" y2="1"><stop offset="0" stop-color="#5ccbf5"/><stop offset="1" stop-color="#5577c4"/></linearGradient>
      <linearGradient id="wg" x1="1" y1="0" x2="0" y2="1"><stop offset="0" stop-color="#4cb87c"/><stop offset=".6" stop-color="#8ccf6c"/><stop offset="1" stop-color="#eeea62"/></linearGradient>
    </defs>
    <path d="M42 1C22 0 0 11 0 28c0 5 6 7 12 5-6-2-7-7-1-13C17 14 26 4 42 1z" fill="url(#wb)" stroke="none"/>
    <path d="M26 13c-9-1-18 5-19 13-1 6 7 7 13 2 3-3 4-6 1-8-1 5-5 9-8 7-4-3 5-12 13-14z" fill="url(#wb)" stroke="none"/>
    <path d="M22 15c12-4 21 2 18 11-2 9-14 15-27 14 12-5 21-12 22-19 0-4-5-6-13-6z" fill="url(#wg)" stroke="none"/>
  </svg>
  <div><strong>极光下载站</strong><span>www.xz7.com</span></div>
</div>
</body>
</html>
```
FILE: styles.css
```css
* { box-sizing: border-box; }
html, body { height: 100%; }
body {
  margin: 0;
  display: flex;
  flex-direction: column;
  overflow: hidden;
  font: 12px/18px "Noto Sans", "Noto Sans CJK SC", sans-serif;
  color: #232b3d;
  background: #f5f6f9;
}
button, input, select { font: inherit; color: inherit; }
button {
  display: flex;
  align-items: center;
  justify-content: center;
  flex: none;
  margin: 0;
  padding: 0;
  border: 0;
  background: none;
  white-space: nowrap;
}
svg { display: block; flex: none; fill: none; stroke: currentColor; stroke-width: 1; overflow: visible; }
.sprite { position: absolute; width: 0; height: 0; }
.i12 { width: 12px; height: 12px; }
.i16 { width: 16px; height: 16px; }
.i18 { width: 18px; height: 18px; }
.i20 { width: 20px; height: 20px; }
.i28 { width: 28px; height: 28px; }
.caret { width: 7px; height: 4px; }
.vline { width: 1px; height: 20px; background: #dcdfe4; flex: none; }

/* document tabs */
.tabbar { display: flex; height: 30px; flex: none; background: #e1e2e6; }
.tab { gap: 4px; padding-top: 1px; }
.tab-home { width: 72px; margin-right: 3px; padding-right: 4px; background: #638dfb; color: #fff; }
.tab-docer { width: 125px; margin-right: 3px; padding-left: 10px; justify-content: flex-start; background: #d8d9dd; color: #4b5262; }
.tab-doc { width: 250px; padding: 1px 13px 0 10px; justify-content: flex-start; background: #fff; color: #111; }
.unsaved { width: 6px; height: 6px; margin-left: auto; border-radius: 50%; background: #e69a0c; }
.newtab { width: 36px; color: #4a5878; }
.window-tools { display: flex; align-items: center; margin-left: auto; padding-right: 6px; gap: 12px; color: #43527a; }
.window-tools button { min-width: 14px; }
.window-tools .vline { margin: 0 -2px; background: #cfd2d8; }
.window-tools button:nth-of-type(3) { margin-left: 4px; }
.window-tools button:nth-of-type(n+5) { margin-left: 2px; }

/* menu row */
.menubar { display: flex; align-items: center; height: 38px; flex: none; background: #fff; padding: 1px 0 0 16px; }
.menubar .vline { height: 24px; }
.file { gap: 6px; margin-right: 10px; }
.quick { display: flex; align-items: center; gap: 9px; padding: 0 8px 0 9px; }
.undo { gap: 4px; margin-right: -2px; }
.redo { color: #b5b9c2; margin-right: 4px; }
.quick button:last-child { margin: 0 1px; }
.menus { display: flex; margin-left: 6px; }
.menus button { height: 20px; padding: 0 13px; }
.menus .current { padding: 0 10px; margin-right: 3px; border-radius: 10px; background: #4a90f0; color: #fff; font-weight: 700; }
.menus .wide { margin-left: 3px; }
.command { display: flex; align-items: center; margin-left: 14px; color: #8a96b0; }
.command input { width: 130px; border: 0; padding: 0; outline: 0; background: none; }
.command input::placeholder { color: #77839f; opacity: 1; }
.cloud-tools { display: flex; align-items: center; margin-left: auto; padding-right: 14px; gap: 11px; color: #56607a; }
.cloud-tools button { gap: 4px; color: #333d54; }
.cloud-tools .vline { height: 20px; }
.cloud-tools .dots { margin: 0 5px 0 2px; }

/* ribbon */
.ribbon { display: flex; height: 64px; flex: none; background: #fff; box-shadow: 0 1px 3px rgba(0, 0, 0, .16); z-index: 1; }
.group { display: flex; position: relative; border-right: 1px solid #e6e8ec; }
.launch { position: absolute; right: 5px; bottom: 4px; width: 6px; height: 6px; }
.big { flex-direction: column; justify-content: flex-start; padding-top: 2px; }
.big span { display: flex; align-items: center; gap: 2px; height: 18px; margin-top: 3px; }
.clipboard { padding-left: 12px; padding-right: 10px; width: 158px; }
.clipboard .big:last-of-type { margin-left: 10px; }
.rows { display: flex; flex-direction: column; margin-left: 10px; }
.small { height: 27px; gap: 2px; }
.font, .para { flex-direction: column; }
.font { width: 317px; padding-left: 5px; }
.para { width: 255px; padding-left: 5px; }
.row { display: flex; align-items: center; height: 27px; }
.tool { width: 24px; height: 24px; border-radius: 2px; }
.tool.drop { width: 35px; justify-content: flex-start; padding-left: 2px; gap: 2px; }
.tool.on { background: #dde1e7; }
.aligns { display: flex; gap: 1px; }
.row > .vline { margin: 0 4px; height: 18px; }
.combo { display: flex; align-items: center; position: relative; background: #fff; }
.combo select { appearance: none; width: 100%; height: 100%; border: 0; padding: 0 20px 0 2px; background: none; outline: 0; }
.combo svg { position: absolute; right: 6px; pointer-events: none; }
.combos { display: flex; width: 195px; height: 24px; margin-right: 3px; border: 1px solid #d9dce1; border-radius: 2px; }
.combo-font { width: 115px; border-right: 1px solid #d9dce1; }
.combo-size { flex: 1; }
.combo-font svg, .combo-size svg { right: 2px; }
.styles { width: 288px; padding: 2px 0 0 5px; }
.gallery { display: flex; width: 277px; height: 50px; border: 1px solid #dcdfe4; border-radius: 2px; }
.style { width: 65px; flex-direction: column; overflow: hidden; padding: 0 2px; }
.style b { display: flex; align-items: center; width: 100%; height: 28px; margin-top: 2px; overflow: hidden; color: #000; font-family: "Open Sans", sans-serif; }
.style span { height: 18px; }
.style.picked { border: 2px solid #dcdee4; padding: 0; }
.style .p0 { font: 11px/26px "Noto Sans", sans-serif; justify-content: center; }
.style .p1 { font-size: 24px; }
.style .p2 { font-size: 20px; }
.style .p3 { font-size: 18px; }
.gallery-scroll { display: flex; flex-direction: column; width: 15px; border-left: 1px solid #e6e8ec; }
.gallery-scroll button { flex: 1; border-bottom: 1px solid #e6e8ec; }
.gallery-scroll button:last-child { border: 0; }
.typeset { width: 79px; justify-content: center; padding-right: 2px; }
.edit { width: 122px; padding-left: 9px; gap: 12px; }

/* work area */
.work { display: flex; flex: 1; min-height: 0; }
.canvas { display: flex; flex: 1; justify-content: center; align-items: flex-start; overflow: hidden; padding-top: 15px; }
.page { position: relative; display: flex; flex-direction: column; width: 604px; aspect-ratio: 604 / 853; padding: 55px 74px; background: #fff; box-shadow: 0 6px 16px 2px rgba(0, 0, 0, .15); }
.marks { display: flex; justify-content: space-between; height: 18px; }
.marks i { width: 18px; border: 0 solid #c6c6c6; }
.marks .m-tl { border-width: 0 1px 1px 0; }
.marks .m-tr { border-width: 0 0 1px 1px; }
.marks .m-bl { border-width: 1px 1px 0 0; }
.marks .m-br { border-width: 1px 0 0 1px; }
.body { flex: 1; padding: 0 18px; position: relative; }
.body p { margin: 0; height: 31px; font: 300 20px/29px "Noto Serif CJK SC", "Noto Sans CJK SC", serif; }
.body mark { display: inline-block; padding: 0 7px 2px 0; background: #c8c8c8; color: #000; }
.smart { position: absolute; left: -36px; top: 7px; gap: 6px; opacity: .9; }
.arrow { position: absolute; left: 74px; top: 102px; width: 60px; height: 140px; filter: drop-shadow(3px 3px 2px rgba(0, 0, 0, .5)); }
.scroll { display: flex; flex-direction: column; align-items: center; gap: 11px; width: 15px; padding-bottom: 7px; background: #e8eaf0; border-right: 1px solid #e1e3e9; }
.scroll-top { display: flex; justify-content: center; align-items: center; width: 14px; height: 14px; background: #f5f6f9; }
.thumb { flex: 1; width: 12px; border-radius: 6px; background: #d5d8e0; }

/* style panel */
.panel { display: flex; flex-direction: column; width: 261px; padding: 0 12px; border-right: 1px solid #dfe2e8; }
.panel-head { display: flex; align-items: center; height: 30px; margin: 0 -4px 9px -3px; color: #48536b; }
.panel-head button { gap: 4px; }
.panel-head .pin { margin: 0 12px 0 auto; }
.current-style { height: 32px; border: 1px solid #d4d8df; border-radius: 2px; font-size: 14px; color: #000; }
.current-style select { padding-left: 6px; }
.current-style svg { right: 8px; }
.panel-buttons { display: flex; gap: 10px; margin-top: 7px; }
.panel-buttons button { width: 78px; height: 23px; border: 1px solid #d4d8df; background: #fff; color: #3e4a63; }
.panel h2 { margin: 20px 0 6px; font: 14px/20px "Noto Sans CJK SC", sans-serif; color: #4b566c; }
.style-list { flex: 1; margin: 0; padding: 2px 12px 0 2px; list-style: none; border: 1px solid #dcdfe4; border-radius: 2px; background: #fff; color: #000; }
.style-list li { display: flex; align-items: center; height: 34px; padding: 0 4px; }
.ret { width: 10px; height: 10px; margin: 0 1px 6px auto; }
.style-list u { margin: 0 3px 6px auto; font-size: 12px; line-height: 14px; }
.h1, .h2, .h4 { font-family: "Open Sans", "Noto Sans CJK SC", sans-serif; font-weight: 700; }
.h1 { font-size: 21px; }
.h2 { font-size: 20px; }
.h4 { font-size: 19px; }
.t12 { font-size: 12px; }
.t13 { font-size: 13px; }
.t14 { font-size: 14px; }
.t16 { font-size: 16px; }
.style-list .chosen { border: 1px solid #4a90f0; padding: 0 3px; }
.show { display: flex; align-items: center; gap: 6px; margin-top: 8px; }
.show .combo { flex: 1; height: 23px; border: 1px solid #d4d8df; color: #48536b; }
.show label { width: 27px; white-space: nowrap; }
.options { display: flex; align-items: center; justify-content: space-between; height: 20px; margin: 9px 5px 27px 0; }
.options label, .options a { display: flex; align-items: center; gap: 5px; }
.options a { gap: 2px; color: #3f7df0; text-decoration: none; }
.options input { appearance: none; display: grid; place-items: center; width: 13px; height: 13px; margin: 0; border: 1px solid #2b2b2b; background: #fff; }
.options input::before { content: ""; width: 8px; height: 4px; margin-bottom: 3px; border: solid #2b2b2b; border-width: 0 0 1px 1px; rotate: -45deg; }

/* right rail */
.rail { display: flex; flex-direction: column; align-items: center; gap: 4px; width: 43px; padding: 11px 2px 0 0; color: #3a4560; }
.grip { width: 20px; height: 4px; margin-bottom: 9px; border: solid #cdd1d8; border-width: 1px 0; }
.rail button { width: 32px; height: 32px; border-radius: 2px; }
.rail .on { background: #d9dde4; }
.rail .rail-more { width: 38px; height: 43px; margin-top: auto; border-top: 1px solid #dfe2e8; border-radius: 0; padding-top: 6px; }

/* status bar */
.status { display: flex; align-items: center; height: 29px; flex: none; border-top: 1px solid #dfe2e8; }
.status .vline { height: 14px; }
.info { width: 64px; padding-left: 3px; text-align: center; }
.check { height: 24px; gap: 2px; padding: 0 3px 0 4px; }
.lit { background: #e6effb; }
.dd { width: 11px; }
.check:not(.lit) { padding-right: 2px; }
.views { display: flex; align-items: center; gap: 2px; margin-left: auto; }
.views button { width: 24px; height: 24px; border-radius: 2px; }
.views .vline { margin: 0 9px 0 8px; }
.views .on { background: #d9dde4; }
.fit { margin: 0 7px 0 4px; }
.percent { gap: 4px; width: 36px; }
.minus { margin: 0 12px 0 11px; }
.zoom { appearance: none; width: 136px; height: 14px; margin: 0 13px 0 0; background: linear-gradient(90deg, #33425f 36%, #d3d7de 36%) center / 100% 1px no-repeat; outline: 0; }
.zoom::-webkit-slider-thumb { appearance: none; width: 12px; height: 12px; border: 1px solid #444; border-radius: 50%; background: #f5f6f9; }
.full { margin: 0 15px 0 11px; }

/* floating overlays */
.ime { position: absolute; right: 3px; bottom: 222px; display: flex; align-items: center; gap: 4px; height: 26px; padding: 0 5px; border: 1px solid #999; border-radius: 5px; background: #fff; box-shadow: 0 1px 4px rgba(0, 0, 0, .6); color: #444; z-index: 2; }
.watermark { position: absolute; right: 11px; bottom: 9px; display: flex; align-items: flex-end; z-index: 2; opacity: .88; pointer-events: none; }
.watermark div { display: flex; flex-direction: column; font-family: "Open Sans", "Noto Sans CJK SC", sans-serif; }
.watermark strong { font-size: 21px; line-height: 24px; color: #5b9bdc; }
.watermark span { font: 700 16px/18px "Liberation Sans", sans-serif; color: #63c481; }
```
